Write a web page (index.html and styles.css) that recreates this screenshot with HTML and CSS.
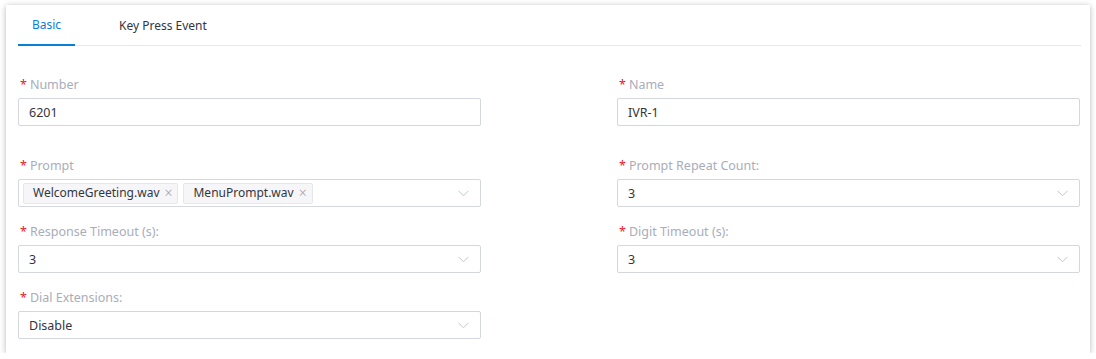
FILE: index.html
```html
<!DOCTYPE html>
<html>
<head>
<meta charset="utf-8">
<link rel="stylesheet" href="styles.css">
</head>
<body>
<div class="card">
  <div class="tabs">
    <div class="tab active">Basic</div>
    <div class="tab">Key Press Event</div>
  </div>
  <div class="form">
    <div class="item first">
      <div class="label"><span class="req">*</span>Number</div>
      <div class="control"><span class="value">6201</span></div>
    </div>
    <div class="item first">
      <div class="label"><span class="req">*</span>Name</div>
      <div class="control"><span class="value">IVR-1</span></div>
    </div>
    <div class="item">
      <div class="label"><span class="req">*</span>Prompt</div>
      <div class="control select multi">
        <span class="tag">WelcomeGreeting.wav<span class="x">×</span></span>
        <span class="tag">MenuPrompt.wav<span class="x">×</span></span>
        <svg class="arrow" width="11" height="7" viewBox="0 0 11 7"><path d="M0.5 0.8 L5.5 5.8 L10.5 0.8" fill="none" stroke="#c3c6d0" stroke-width="1"/></svg>
      </div>
    </div>
    <div class="item">
      <div class="label"><span class="req">*</span>Prompt Repeat Count:</div>
      <div class="control select"><span class="value">3</span>
        <svg class="arrow" width="11" height="7" viewBox="0 0 11 7"><path d="M0.5 0.8 L5.5 5.8 L10.5 0.8" fill="none" stroke="#c3c6d0" stroke-width="1"/></svg>
      </div>
    </div>
    <div class="item">
      <div class="label"><span class="req">*</span>Response Timeout (s):</div>
      <div class="control select"><span class="value">3</span>
        <svg class="arrow" width="11" height="7" viewBox="0 0 11 7"><path d="M0.5 0.8 L5.5 5.8 L10.5 0.8" fill="none" stroke="#c3c6d0" stroke-width="1"/></svg>
      </div>
    </div>
    <div class="item">
      <div class="label"><span class="req">*</span>Digit Timeout (s):</div>
      <div class="control select"><span class="value">3</span>
        <svg class="arrow" width="11" height="7" viewBox="0 0 11 7"><path d="M0.5 0.8 L5.5 5.8 L10.5 0.8" fill="none" stroke="#c3c6d0" stroke-width="1"/></svg>
      </div>
    </div>
    <div class="item">
      <div class="label"><span class="req">*</span>Dial Extensions:</div>
      <div class="control select"><span class="value">Disable</span>
        <svg class="arrow" width="11" height="7" viewBox="0 0 11 7"><path d="M0.5 0.8 L5.5 5.8 L10.5 0.8" fill="none" stroke="#c3c6d0" stroke-width="1"/></svg>
      </div>
    </div>
  </div>
</div>
</body>
</html>
```
FILE: styles.css
```css
html, body {
  margin: 0;
  padding: 0;
  background: #ffffff;
}
body {
  font-family: "Noto Sans", "Open Sans", sans-serif;
  font-size: 12px;
  color: #333640;
}
.card {
  margin: 5px 0 0 6px;
  width: 1084px;
  height: 348px;
  box-sizing: border-box;
  background: #fff;
  box-shadow: 0 1px 6px rgba(0, 0, 0, 0.28);
  padding: 0 10px 0 12px;
}
.tabs {
  display: flex;
  gap: 30px;
  height: 41px;
  border-bottom: 1px solid #e8e9ec;
  box-sizing: border-box;
  margin-right: -1px;
}
.tab {
  padding: 1px 14px 0;
  line-height: 40px;
  height: 40px;
  box-sizing: border-box;
  color: #333640;
}
.tab.active {
  color: #0a7fd6;
  border-bottom: 2px solid #0a7fd6;
  height: 41px;
  margin-bottom: -1px;
  width: 57px;
  text-align: center;
  padding: 1px 0 0;
  line-height: 38px;
}
.form {
  display: grid;
  grid-template-columns: 463px 463px;
  column-gap: 136px;
  row-gap: 14px;
  padding-top: 28px;
}
.item.first {
  margin-bottom: 15px;
}
.label {
  height: 20px;
  line-height: 20px;
  padding-top: 1px;
  margin-bottom: 3px;
  color: #a9adba;
  font-size: 12.5px;
}
.req {
  color: #f0141e;
  margin-right: 3px;
  margin-left: 2px;
}
.control {
  height: 28px;
  box-sizing: border-box;
  border: 1px solid #d5d7de;
  border-radius: 2px;
  display: flex;
  align-items: center;
  padding: 0 10px;
  position: relative;
  font-size: 12.5px;
}
.value {
  color: #333640;
}
.select .arrow {
  position: absolute;
  right: 11px;
  top: 10px;
}
.multi {
  padding: 0 4px;
  gap: 5px;
  font-size: 12px;
}
.tag {
  height: 21px;
  line-height: 20px;
  box-sizing: border-box;
  border: 1px solid #e6e7eb;
  background: #f6f6f8;
  border-radius: 2px;
  padding: 0 5px 0 9px;
  display: inline-flex;
  align-items: center;
  color: #333640;
}
.tag .x {
  color: #9a9ea9;
  font-size: 14px;
  font-weight: 300;
  margin-left: 5px;
}
```
